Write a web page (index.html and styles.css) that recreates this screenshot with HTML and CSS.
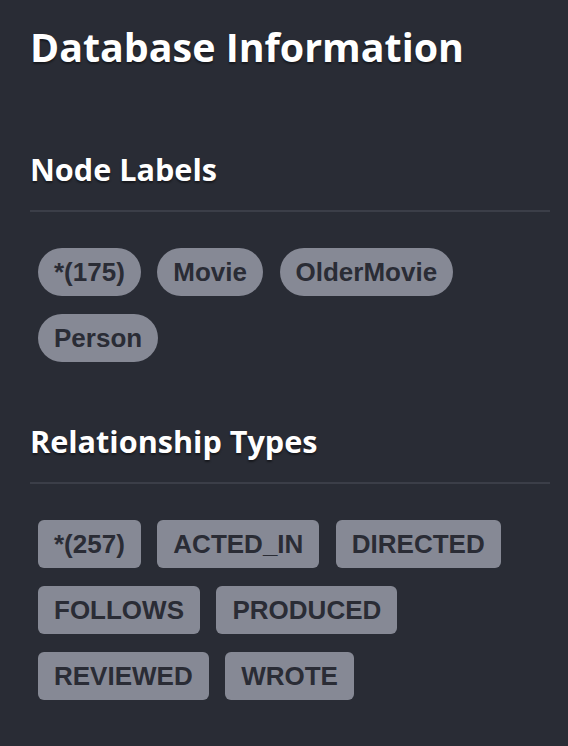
FILE: index.html
```html
<!DOCTYPE html>
<html>
<head>
<meta charset="utf-8">
<link rel="stylesheet" href="styles.css">
</head>
<body>
<div class="panel">
  <h1 class="title">Database Information</h1>
  <section class="section">
    <h3 class="section-title">Node Labels</h3>
    <div class="tags">
      <span class="tag pill">*(175)</span>
      <span class="tag pill">Movie</span>
      <span class="tag pill">OlderMovie</span>
      <span class="tag pill">Person</span>
    </div>
  </section>
  <section class="section">
    <h3 class="section-title">Relationship Types</h3>
    <div class="tags">
      <span class="tag rect">*(257)</span>
      <span class="tag rect">ACTED_IN</span>
      <span class="tag rect">DIRECTED</span>
      <span class="tag rect">FOLLOWS</span>
      <span class="tag rect">PRODUCED</span>
      <span class="tag rect">REVIEWED</span>
      <span class="tag rect">WROTE</span>
    </div>
  </section>
</div>
</body>
</html>
```
FILE: styles.css
```css
html, body {
  margin: 0;
  padding: 0;
  background: #292c35;
}
.panel {
  padding: 23px 18px 0 30px;
}
.title {
  margin: 0;
  font-family: "Open Sans", sans-serif;
  font-weight: 700;
  font-size: 39.4px;
  line-height: 48px;
  color: #fff;
  text-shadow: 0 2px 2px rgba(0, 0, 0, 0.45);
}
.section {
  margin-top: 78px;
}
.section + .section {
  margin-top: 59px;
}
.section-title {
  margin: 0;
  padding-bottom: 21px;
  border-bottom: 2px solid #3b3e48;
  font-family: "Open Sans", sans-serif;
  font-weight: 700;
  font-size: 30.6px;
  line-height: 40px;
  color: #fff;
  text-shadow: 0 2px 2px rgba(0, 0, 0, 0.45);
}
.tags {
  display: flex;
  flex-wrap: wrap;
  gap: 18px 16.5px;
  padding: 36px 0 0 8px;
}
.tag {
  display: inline-block;
  height: 48px;
  line-height: 48px;
  padding: 0 16px;
  background: #868995;
  color: #2a2c35;
  font-family: "Liberation Sans", Arial, sans-serif;
  font-weight: 700;
  font-size: 26px;
}
.pill {
  border-radius: 24px;
}
.rect {
  border-radius: 6px;
}
```
